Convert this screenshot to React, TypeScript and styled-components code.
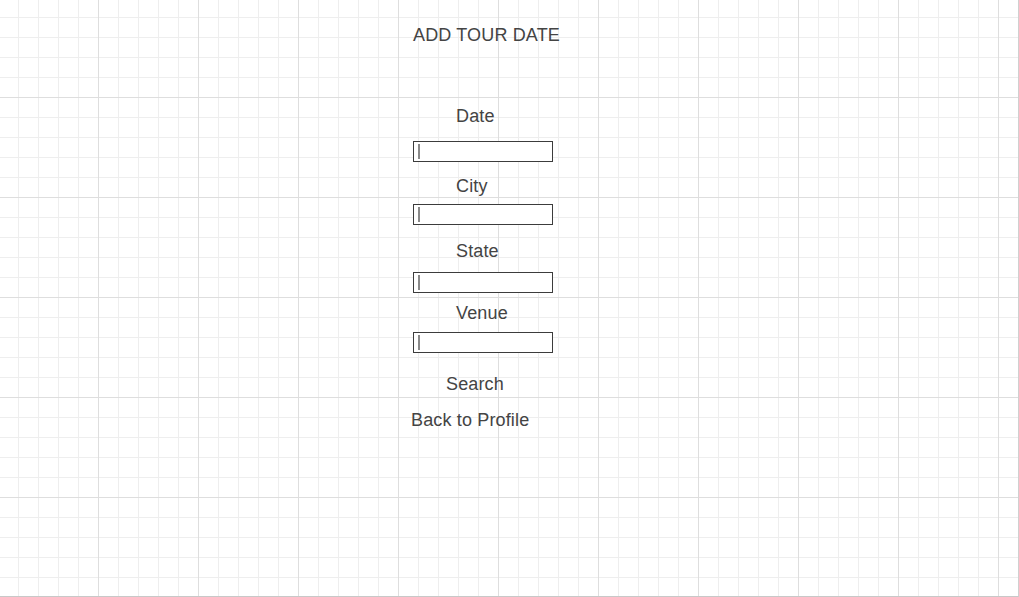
import styled, { createGlobalStyle } from 'styled-components';

const GlobalStyle = createGlobalStyle`
  html, body {
    margin: 0;
    padding: 0;
    height: 100%;
  }
  body {
    font-family: "Liberation Sans", Arial, sans-serif;
    color: #444;
  }
  #root {
    height: 100%;
  }
`;

const Canvas = styled.div`
  box-sizing: border-box;
  height: 597px;
  width: 1019px;
  overflow: hidden;
  border-right: 1px solid #d0d0d0;
  border-bottom: 1px solid #c8c8c8;
  background-color: #fff;
  background-image:
    linear-gradient(to right, #dedede 1px, transparent 1px),
    linear-gradient(to bottom, #dedede 1px, transparent 1px),
    linear-gradient(to right, #eeeeee 1px, transparent 1px),
    linear-gradient(to bottom, #eeeeee 1px, transparent 1px);
  background-size: 100px 100px, 100px 100px, 20px 20px, 20px 20px;
  background-position: 98px 0, 0 97px, 18px 0, 0 17px;
`;

const Form = styled.form`
  display: flex;
  flex-direction: column;
  align-items: flex-start;
  padding: 25px 0 0 411px;
`;

const Title = styled.h1`
  margin: 0 0 0 2px;
  font-size: 18px;
  font-weight: normal;
  line-height: 21px;
  letter-spacing: 0.15px;
`;

const Label = styled.label<{ $top: number }>`
  display: block;
  margin: ${({ $top }) => $top}px 0 0 45px;
  font-size: 18px;
  line-height: 21px;
  letter-spacing: 0.15px;
`;

const Field = styled.input<{ $top: number }>`
  box-sizing: border-box;
  display: block;
  width: 140px;
  height: 21px;
  margin: ${({ $top }) => $top}px 0 0 2px;
  padding: 0 6px;
  border: 1px solid #3c3c3c;
  border-radius: 0;
  outline: none;
  font: 13px "Liberation Sans", Arial, sans-serif;
  color: #444;
  background: #fff linear-gradient(#8a8a8a, #8a8a8a) no-repeat 4px 2px / 2px 15px;
`;

const LinkButton = styled.button<{ $top: number; $left: number }>`
  margin: ${({ $top }) => $top}px 0 0 ${({ $left }) => $left}px;
  padding: 0;
  border: none;
  background: none;
  font-family: "Liberation Sans", Arial, sans-serif;
  font-size: 18px;
  line-height: 21px;
  letter-spacing: 0.15px;
  color: #444;
  cursor: pointer;
`;

const fields = [
  { id: 'date', label: 'Date', labelTop: 60, inputTop: 14 },
  { id: 'city', label: 'City', labelTop: 14, inputTop: 7 },
  { id: 'state', label: 'State', labelTop: 16, inputTop: 10 },
  { id: 'venue', label: 'Venue', labelTop: 10, inputTop: 8 },
];

export default function App() {
  return (
    <>
      <GlobalStyle />
      <Canvas>
        <Form onSubmit={e => e.preventDefault()}>
          <Title>ADD TOUR DATE</Title>
          {fields.map(f => (
            <div key={f.id}>
              <Label htmlFor={f.id} $top={f.labelTop}>
                {f.label}
              </Label>
              <Field id={f.id} name={f.id} $top={f.inputTop} />
            </div>
          ))}
          <LinkButton type="submit" $top={21} $left={35}>
            Search
          </LinkButton>
          <LinkButton type="button" $top={15} $left={0}>
            Back to Profile
          </LinkButton>
        </Form>
      </Canvas>
    </>
  );
}
